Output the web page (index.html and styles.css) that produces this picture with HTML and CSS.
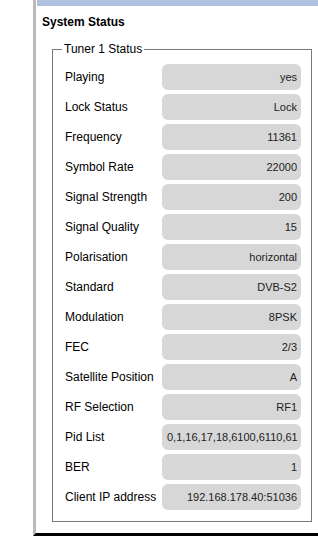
FILE: index.html
```html
<!DOCTYPE html>
<html>
<head>
<meta charset="utf-8">
<link rel="stylesheet" href="styles.css">
</head>
<body>
<div class="frame">
  <div class="topbar"></div>
  <h2 class="title">System Status</h2>
  <fieldset class="tuner">
    <legend>Tuner 1 Status</legend>
    <div class="rows">
      <div class="label">Playing</div><div class="value">yes</div>
      <div class="label">Lock Status</div><div class="value">Lock</div>
      <div class="label">Frequency</div><div class="value">11361</div>
      <div class="label">Symbol Rate</div><div class="value">22000</div>
      <div class="label">Signal Strength</div><div class="value">200</div>
      <div class="label">Signal Quality</div><div class="value">15</div>
      <div class="label">Polarisation</div><div class="value">horizontal</div>
      <div class="label">Standard</div><div class="value">DVB-S2</div>
      <div class="label">Modulation</div><div class="value">8PSK</div>
      <div class="label">FEC</div><div class="value">2/3</div>
      <div class="label">Satellite Position</div><div class="value">A</div>
      <div class="label">RF Selection</div><div class="value">RF1</div>
      <div class="label">Pid List</div><div class="value left">0,1,16,17,18,6100,6110,61</div>
      <div class="label">BER</div><div class="value">1</div>
      <div class="label">Client IP address</div><div class="value">192.168.178.40:51036</div>
    </div>
  </fieldset>
</div>
</body>
</html>
```
FILE: styles.css
```css
html, body {
  margin: 0;
  padding: 0;
  background: #fff;
}
body {
  font-family: "Liberation Sans", Arial, sans-serif;
  color: #000;
}
.frame {
  margin-left: 33px;
  border-left: 3px solid #bbbbbb;
  border-bottom: 3px solid #000;
  padding-left: 1px;
  height: 533px;
  box-sizing: content-box;
  display: flex;
  flex-direction: column;
}
.topbar {
  height: 6px;
  background: #b0c1df;
}
.title {
  margin: 9px 0 0 5px;
  font-size: 12px;
  line-height: 14px;
  font-weight: bold;
}
.tuner {
  margin: 13px 6px 0 15px;
  padding: 8px 10px 11px 9px;
  border: 1px solid #7a7a7a;
  min-width: 0;
}
.tuner legend {
  font-size: 12px;
  line-height: 14px;
  padding: 0 2px;
}
.rows {
  margin-left: 3px;
  display: grid;
  grid-template-columns: 97px 1fr;
  grid-auto-rows: 26px;
  row-gap: 4px;
  font-size: 12px;
}
.label {
  display: flex;
  align-items: center;
  white-space: nowrap;
}
.value {
  background: #d7d7d7;
  border-radius: 6px;
  font-size: 11px;
  color: #222;
  display: flex;
  align-items: center;
  justify-content: flex-end;
  padding: 0 4px 0 5px;
  white-space: nowrap;
  min-width: 0;
}
.value.left {
  justify-content: flex-start;
}
```
